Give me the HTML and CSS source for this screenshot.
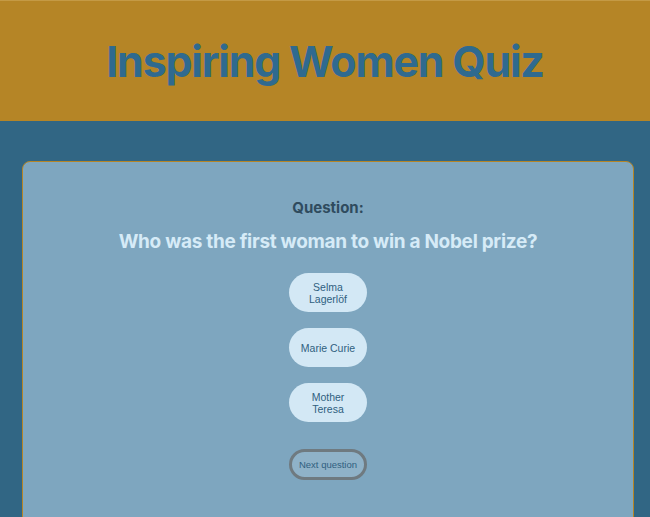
FILE: index.html
```html
<!DOCTYPE html>
<html>
<head>
<meta charset="utf-8">
<link rel="stylesheet" href="styles.css">
</head>
<body>
<header class="header">
  <h1 class="title">Inspiring Women Quiz</h1>
</header>
<main class="main">
  <section class="card">
    <h3 class="label">Question:</h3>
    <h2 class="question">Who was the first woman to win a Nobel prize?</h2>
    <div class="answers">
      <button class="answer">Selma<br>Lagerlöf</button>
      <button class="answer">Marie Curie</button>
      <button class="answer">Mother<br>Teresa</button>
    </div>
    <button class="next">Next question</button>
  </section>
</main>
</body>
</html>
```
FILE: styles.css
```css
html, body {
  margin: 0;
  padding: 0;
  height: 100%;
}
body {
  background: #316684;
  font-family: Inter, "Noto Sans", sans-serif;
  overflow: hidden;
}
.header {
  background: #b58526;
  height: 121px;
  display: flex;
  align-items: center;
  justify-content: center;
  border-top: 1px solid #c49a45;
  box-sizing: border-box;
}
.title {
  margin: 0;
  font-size: 43px;
  font-weight: 700;
  color: #2f6a8f;
  letter-spacing: -1.25px;
}
.main {
  padding: 40px 16px 0 22px;
}
.card {
  background: #7ea6bf;
  border: 1px solid #b58526;
  border-radius: 8px;
  padding: 35px 20px 40px;
  display: flex;
  flex-direction: column;
  align-items: center;
  min-height: 400px;
}
.label {
  margin: 0;
  font-size: 15px;
  font-weight: 700;
  color: #2f4b5e;
  line-height: 22px;
}
.question {
  margin: 10px 0 0;
  font-size: 19px;
  font-weight: 700;
  color: #d6ebf7;
  line-height: 26px;
  letter-spacing: -0.3px;
}
.answers {
  margin-top: 18px;
  display: flex;
  flex-direction: column;
  align-items: center;
  gap: 16px;
}
.answer {
  width: 78px;
  height: 39px;
  border: none;
  border-radius: 20px;
  background: #d3e8f5;
  color: #2f6080;
  font-family: "Liberation Sans", Arial, sans-serif;
  font-size: 10.5px;
  line-height: 12px;
  padding: 0;
}
.next {
  margin-top: 27px;
  width: 78px;
  height: 31px;
  border: 3px solid #6f7a80;
  border-radius: 16px;
  background: #8fb2c8;
  color: #2f6080;
  font-family: "Liberation Sans", Arial, sans-serif;
  font-size: 9.5px;
  padding: 0;
}
```
